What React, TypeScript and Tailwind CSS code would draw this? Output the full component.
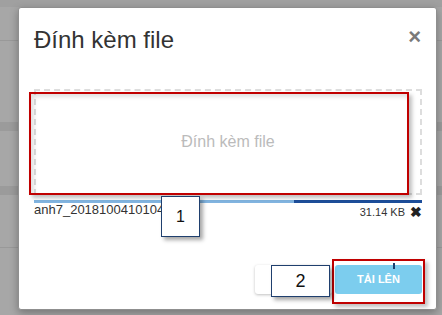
import React from "react";

export default function App() {
  const font = { fontFamily: '"Liberation Sans", Arial, sans-serif' };
  return (
    <div className="relative w-[442px] h-[315px] overflow-hidden bg-[#a7a7a7]" style={font}>
      {/* background page stripes */}
      <div className="flex flex-col w-full h-full">
        <div className="h-[7px] bg-[#a0a0a0]" />
        <div className="h-[33px]" />
        <div className="h-px bg-[#999999]" />
        <div className="h-[81px]" />
        <div className="h-[9px] bg-[#9b9b9b]" />
        <div className="h-[55px]" />
        <div className="h-[9px] bg-[#9b9b9b]" />
        <div className="h-[52px]" />
        <div className="h-px bg-[#999999]" />
      </div>

      {/* modal */}
      <div className="absolute left-[18px] top-[7px] w-[419px] h-[303px] bg-white rounded-[3px] border border-[#8f8f8f] shadow-[0_3px_9px_rgba(0,0,0,0.3)] flex flex-col">
        <div className="flex items-start justify-between pl-[15px] pr-[15px] pt-[19px]">
          <div className="text-[24px] leading-[26px] text-[#333333]">Đính kèm file</div>
          <div className="text-[22px] leading-[22px] font-bold text-[#7a7a7a] mt-[-1px]">×</div>
        </div>
        <div className="pl-[15px] pr-[14px] mt-[36px] flex flex-col">
          <div className="h-[106px] border-2 border-dashed border-[#dddddd] flex items-center justify-center">
            <span className="text-[16px] text-[#bbbbbb]">Đính kèm file</span>
          </div>
          <div className="mt-[5px] h-[3px] flex">
            <div className="w-[260px] bg-[#82b5e1]" />
            <div className="flex-1 bg-[#1d4e9a]" />
          </div>
          <div className="flex items-start justify-between">
            <span className="text-[13px] leading-[13px] text-[#333333]">anh7_2018100410104</span>
            <div className="flex items-center gap-[5px] mt-[2px]">
              <span className="text-[11px] leading-[14px] text-[#333333]">31.14 KB</span>
              <span className="text-[14px] leading-[14px] font-bold text-[#222222]">✖</span>
            </div>
          </div>
        </div>
        <div className="mt-auto flex justify-end gap-[3px] pr-[14px] pb-[15px]">
          <div className="w-[77px] h-[29px] bg-white rounded-[3px] shadow-[0_1px_3px_rgba(0,0,0,0.25)]" />
          <div className="w-[87px] h-[29px] bg-[#7ccdee] rounded-[3px] flex items-center justify-center">
            <span className="text-[11px] font-bold text-white">TẢI LÊN</span>
          </div>
        </div>
      </div>

      {/* annotations */}
      <div className="absolute left-[29px] top-[92px] w-[380px] h-[103px] border-2 border-[#c00000] shadow-[3px_3px_4px_rgba(0,0,0,0.25),inset_3px_3px_4px_rgba(0,0,0,0.12)]" />
      <div className="absolute left-[332px] top-[259px] w-[93px] h-[45px] border-2 border-[#c00000] shadow-[3px_3px_4px_rgba(0,0,0,0.25)]" />
      <div className="absolute left-[161px] top-[196px] w-[39px] h-[41px] bg-white border border-[#1f3f6e] shadow-[3px_3px_4px_rgba(0,0,0,0.35)] flex items-center justify-center">
        <span className="text-[16px] text-[#111111]">1</span>
      </div>
      <div className="absolute left-[271px] top-[265px] w-[59px] h-[32px] bg-white border border-[#1f3f6e] shadow-[3px_3px_4px_rgba(0,0,0,0.35)] flex items-center justify-center">
        <span className="text-[18px] text-[#111111]">2</span>
      </div>
      <div className="absolute left-[393px] top-[263px] w-[2px] h-[6px] bg-[#1f3f6e]" />
    </div>
  );
}
